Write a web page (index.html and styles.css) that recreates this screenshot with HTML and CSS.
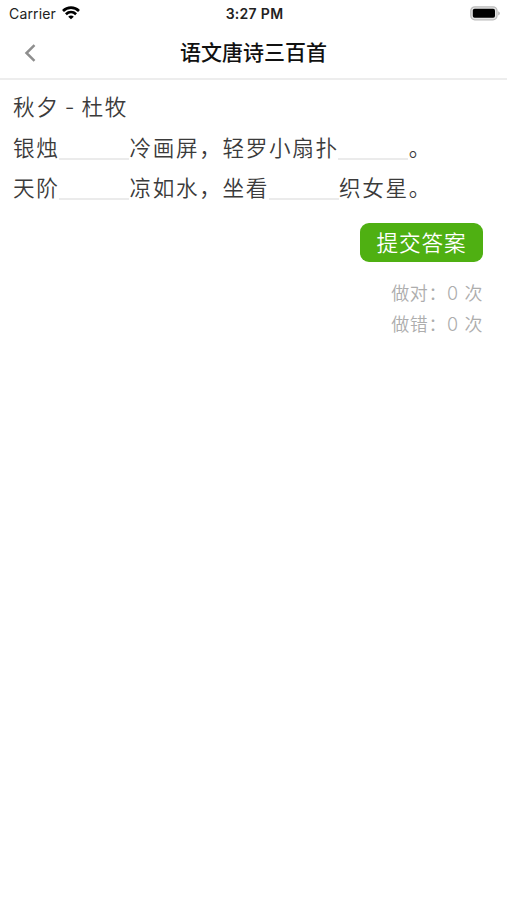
FILE: index.html
```
<!DOCTYPE html>
<html lang="zh-CN">
<head>
  <meta charset="UTF-8">
  <title>语文唐诗三百首</title>
  <link rel="stylesheet" href="styles.css">
</head>
<body>
  <div class="status-bar">
    <div class="carrier">
      <span>Carrier</span>
      <svg class="wifi" width="18" height="14" viewBox="0 0 18 14" fill="none" stroke="#000" stroke-width="2.7">
        <path d="M1 4.9C5.5 .6 12.5 .6 17 4.9"/>
        <path d="M3.9 8.2C6.9 5.5 11.1 5.5 14.1 8.2"/>
        <path d="M9 13.3L6.2 10.7C7.8 9.2 10.2 9.2 11.8 10.7Z" fill="#000" stroke="none"/>
      </svg>
    </div>
    <span class="time">3:27 PM</span>
    <svg class="battery" width="30" height="15" viewBox="0 0 30 15">
      <rect x=".8" y=".8" width="26.2" height="13" rx="4" fill="#e4e4e4" stroke="#bcbcbc" stroke-width="1.3"/>
      <rect x="2.8" y="2.8" width="22.2" height="9" rx="1.8" fill="#000"/>
      <path d="M28.3 5.2C30.2 6 30.2 8.6 28.3 9.4Z" fill="#aaa"/>
    </svg>
  </div>

  <nav class="navbar">
    <svg class="back" width="12" height="18" viewBox="0 0 12 18" fill="none" stroke="#8e8e8e" stroke-width="2.5">
      <path d="M10.5 1.2L2.5 9L10.5 16.8"/>
    </svg>
    <h1>语文唐诗三百首</h1>
  </nav>

  <div class="container">
    <div class="poem">
      <p class="heading">秋夕 - 杜牧</p>
      <p>银烛<span class="blank"></span>冷画屏，轻罗小扇扑<span class="blank"></span>。</p>
      <p>天阶<span class="blank"></span>凉如水，坐看<span class="blank"></span>织女星。</p>
    </div>
    <div class="result">
      <button class="submit">提交答案</button>
      <p>做对：0 次</p>
      <p>做错：0 次</p>
    </div>
  </div>
</body>
</html>
```

FILE: styles.css
```
* {
  box-sizing: border-box;
}

body {
  margin: 0;
  min-height: 100vh;
  background: #fff;
  color: #3b3b3b;
  font-family: Inter, "Noto Sans CJK SC", sans-serif;
}

h1, p {
  margin: 0;
}

.status-bar {
  display: grid;
  grid-template-columns: 1fr auto 1fr;
  align-items: center;
  height: 26px;
  padding: 0 7px 0 9px;
  font-size: 14px;
  color: #222;
}

.carrier {
  display: flex;
  align-items: center;
  gap: 6px;
  letter-spacing: 0.15px;
}

.time {
  font-size: 14px;
  font-weight: 600;
  letter-spacing: 0.3px;
}

.battery {
  justify-self: end;
}

.navbar {
  display: grid;
  grid-template-columns: 40px 1fr 40px;
  align-items: center;
  height: 54px;
  padding: 2px 24px 0;
  border-bottom: 2px solid #ededed;
}

.navbar h1 {
  color: #111;
  font-size: 21px;
  font-weight: 500;
  line-height: 30px;
  text-align: center;
}

.container {
  padding: 7px 24px 0 13px;
}

.poem p {
  height: 40.5px;
  font-size: 21.6px;
  font-weight: 350;
  letter-spacing: 1.65px;
  line-height: 40.5px;
  white-space: nowrap;
}

.poem .heading {
  word-spacing: -2.4px;
}

.blank {
  display: inline-block;
  width: 70px;
  height: 30px;
  margin: 0 0.3px 0 -0.3px;
  border-bottom: 2px solid #ebebeb;
  vertical-align: -4px;
}

.result {
  display: flex;
  flex-direction: column;
  align-items: flex-end;
  padding-top: 14px;
}

.submit {
  width: 123px;
  height: 39px;
  margin-bottom: 16px;
  padding: 0 0 2px;
  background: #4fb012;
  color: #fff;
  border: none;
  border-radius: 9px;
  font-family: inherit;
  font-size: 21.6px;
  font-weight: 350;
  letter-spacing: 0.9px;
  cursor: pointer;
}

.result p {
  color: #adadad;
  font-size: 18px;
  font-weight: 350;
  letter-spacing: 0.6px;
  line-height: 31px;
}
```
